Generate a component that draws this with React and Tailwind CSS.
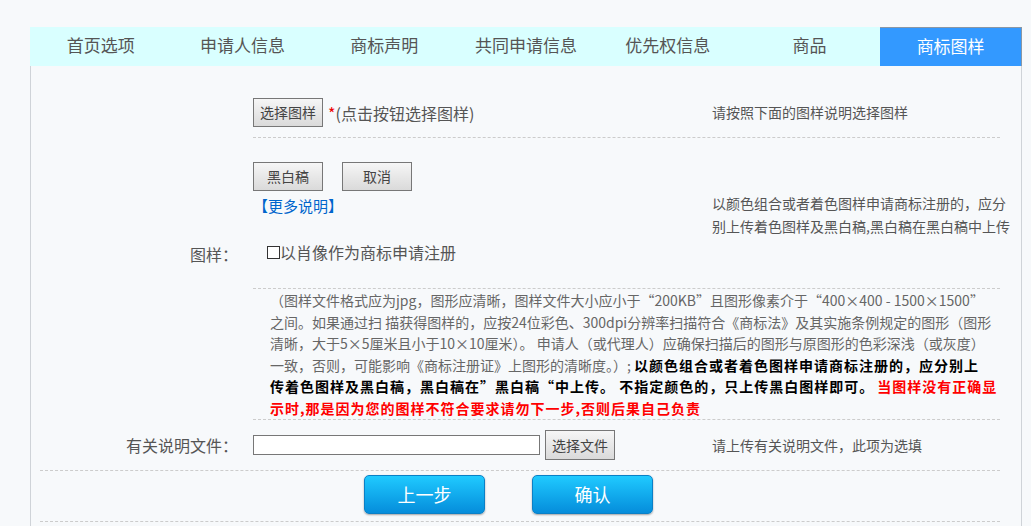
export default function App() {
  const tabs = ["首页选项", "申请人信息", "商标声明", "共同申请信息", "优先权信息", "商品", "商标图样"];
  const font = { fontFamily: '"Noto Sans CJK SC", "Microsoft YaHei", sans-serif' };
  const grayBtn =
    "w-[70px] h-[29px] border border-[#777] bg-linear-to-b from-[#f6f6f6] to-[#dadada] text-[14px] text-[#444] flex items-center justify-center shrink-0";
  const blueBtn =
    "w-[121px] h-[39px] rounded-[5px] border border-[#0b80c6] bg-linear-to-b from-[#20caff] to-[#068ddb] text-white text-[18px] flex items-center justify-center shadow-[0_1px_2px_rgba(0,0,0,0.35)]";
  return (
    <div className="min-h-screen bg-[#f7f9fb] pt-[27px]" style={font}>
      <div className="ml-[30px] w-[992px]">
        <div className="grid grid-cols-7 h-[39px] bg-[#d9ffff]">
          {tabs.map((t, i) =>
            i === 6 ? (
              <div
                key={t}
                className="flex items-center justify-center pb-[3px] bg-[#3399ff] text-white text-[17px] border-t border-r border-[#8a97a5]"
              >
                {t}
              </div>
            ) : (
              <div key={t} className="flex items-center justify-center pb-[3px] text-[#555] text-[17px]">
                {t}
              </div>
            )
          )}
        </div>
        <div className="border-l border-r border-[#cfd3d8] pt-[22px] pb-[10px]">
          <div className="flex">
            <div className="w-[207px] shrink-0 flex items-center justify-end text-[16px] text-[#555]">图样：</div>
            <div className="ml-[15px] w-[747px] shrink-0">
              <div className="h-[50px] flex items-center border-b border-dashed border-[#cccccc]">
                <div className="w-[459px] shrink-0 flex items-center">
                  <button className={grayBtn}>选择图样</button>
                  <span className="ml-[5px] text-[16px] text-[#555] leading-[20px]">
                    <span className="text-[#e00]">*</span>(点击按钮选择图样)
                  </span>
                </div>
                <div className="text-[14px] text-[#555] whitespace-nowrap">请按照下面的图样说明选择图样</div>
              </div>
              <div className="h-[151px] flex border-b border-dashed border-[#cccccc]">
                <div className="w-[459px] shrink-0 flex flex-col pt-[24px]">
                  <div className="flex gap-[19px]">
                    <button className={grayBtn}>黑白稿</button>
                    <button className={grayBtn}>取消</button>
                  </div>
                  <div className="mt-[5px] h-[20px] leading-[20px] text-[15px] text-[#0066cc]">【更多说明】</div>
                  <div className="mt-[24px] pl-[14px] flex items-center h-[24px] text-[16px] text-[#555]">
                    <span className="w-[13px] h-[13px] border border-[#333] bg-white"></span>
                    <span>以肖像作为商标申请注册</span>
                  </div>
                </div>
                <div className="flex items-center pt-[3px] text-[14px] text-[#555] leading-[23px] whitespace-nowrap">
                  <div>
                    以颜色组合或者着色图样申请商标注册的，应分
                    <br />
                    别上传着色图样及黑白稿,黑白稿在黑白稿中上传
                  </div>
                </div>
              </div>
              <div className="h-[131px] border-b border-dashed border-[#cccccc] pl-[17px] pt-[1px] text-[14px] leading-[21.5px] text-[#666] whitespace-nowrap">
                <div>（图样文件格式应为jpg，图形应清晰，图样文件大小应小于“200KB”且图形像素介于“400×400 - 1500×1500”</div>
                <div>之间。如果通过扫 描获得图样的，应按24位彩色、300dpi分辨率扫描符合《商标法》及其实施条例规定的图形（图形</div>
                <div>清晰，大于5×5厘米且小于10×10厘米）。 申请人（或代理人）应确保扫描后的图形与原图形的色彩深浅（或灰度）</div>
                <div>
                  一致，否则，可能影响《商标注册证》上图形的清晰度。）;{" "}
                  <b className="text-black tracking-[1px]">以颜色组合或者着色图样申请商标注册的，应分别上</b>
                </div>
                <div>
                  <b className="text-black tracking-[1px]">传着色图样及黑白稿，黑白稿在”黑白稿“中上传。 不指定颜色的，只上传黑白图样即可。</b>{" "}
                  <b className="text-[#ff0000] tracking-[1px]">当图样没有正确显</b>
                </div>
                <div>
                  <b className="text-[#ff0000] tracking-[1px]">示时,那是因为您的图样不符合要求请勿下一步,否则后果自己负责</b>
                </div>
              </div>
            </div>
          </div>
          <div className="ml-[9px] w-[960px] h-[51px] flex items-center border-b border-dashed border-[#cccccc]">
            <div className="w-[198px] shrink-0 text-right text-[16px] text-[#555]">有关说明文件：</div>
            <div className="ml-[15px] w-[287px] h-[20px] shrink-0 border border-[#777] bg-white"></div>
            <button className={grayBtn + " ml-[5px] h-[30px]"}>选择文件</button>
            <div className="ml-[97px] text-[14px] text-[#555] whitespace-nowrap">请上传有关说明文件，此项为选填</div>
          </div>
          <div className="ml-[9px] w-[960px] h-[51px] flex items-start pt-[4px] border-b border-dashed border-[#cccccc]">
            <button className={blueBtn + " ml-[324px]"}>上一步</button>
            <button className={blueBtn + " ml-[47px]"}>确认</button>
          </div>
        </div>
      </div>
    </div>
  );
}
